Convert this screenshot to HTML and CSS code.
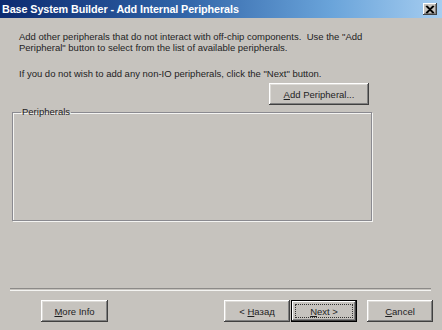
FILE: index.html
```html
<!DOCTYPE html>
<html>
<head>
<meta charset="utf-8">
<link rel="stylesheet" href="styles.css">
</head>
<body>
<div class="window">
  <div class="titlebar">
    <span class="title">Base System Builder - Add Internal Peripherals</span>
    <span class="close"><svg width="10" height="9" viewBox="0 0 10 9"><path d="M1 1 L8 8 M2 1 L9 8 M8 1 L1 8 M9 1 L2 8" stroke="#000" stroke-width="1.2"/></svg></span>
  </div>
  <div class="content">
    <p class="intro">Add other peripherals that do not interact with off-chip components.&nbsp; Use the "Add<br>Peripheral" button to select from the list of available peripherals.</p>
    <p class="hint">If you do not wish to add any non-IO peripherals, click the "Next" button.</p>
    <div class="addrow"><button class="btn add"><u>A</u>dd Peripheral...</button></div>
    <fieldset class="group"><legend>Peripherals</legend></fieldset>
  </div>
  <div class="footer">
    <div class="sep"></div>
    <div class="buttons">
      <button class="btn"><u>M</u>ore Info</button>
      <button class="btn back">&lt; <u>Н</u>азад</button>
      <button class="btn default"><u>N</u>ext &gt;</button>
      <button class="btn cancel"><u>C</u>ancel</button>
    </div>
  </div>
</div>
</body>
</html>
```
FILE: styles.css
```css
html, body { margin: 0; padding: 0; }
body { background: #c6c3be; }
.window {
  width: 442px;
  height: 330px;
  display: flex;
  flex-direction: column;
  background: #c6c3be;
  font-family: "Liberation Sans", Arial, sans-serif;
  font-size: 9.5px;
  color: #1e1e1e;
  box-sizing: border-box;
  overflow: hidden;
}
.titlebar {
  height: 18px;
  flex: none;
  display: flex;
  align-items: center;
  justify-content: space-between;
  padding: 0 5px 0 2px;
  background: linear-gradient(90deg, #0c2a70 0%, #2f62a6 40%, #6aa4da 75%, #a6cdf0 100%);
}
.title {
  color: #fff;
  font-weight: bold;
  font-size: 10.8px;
  letter-spacing: -0.1px;
  white-space: nowrap;
}
.close {
  width: 14px;
  height: 12px;
  display: flex;
  align-items: center;
  justify-content: center;
  background: #c6c3be;
  box-shadow: inset -1px -1px #404040, inset 1px 1px #fff, inset -2px -2px #808080;
}
.content {
  padding: 13px 0 0 12px;
  display: flex;
  flex-direction: column;
}
.intro, .hint {
  margin: 0;
  padding-left: 7px;
  line-height: 11px;
  white-space: nowrap;
}
.hint { margin-top: 15px; }
.addrow {
  display: flex;
  justify-content: flex-end;
  width: 357px;
  margin-top: 4px;
}
.btn {
  font-family: "Liberation Sans", Arial, sans-serif;
  font-size: 9.5px;
  color: #1e1e1e;
  background: #c6c3be;
  border: none;
  padding: 0;
  height: 22px;
  width: 66px;
  box-shadow: inset -1px -1px #404040, inset 1px 1px #fff, inset -2px -2px #808080, inset 2px 2px #dcdad6;
}
.add { width: 100px; }
.group {
  margin: 2px 0 0 0;
  padding: 0;
  width: 360px;
  height: 114px;
  box-sizing: border-box;
  border: 1px solid #8a8a90;
  box-shadow: inset 1px 1px #f4f4f2, 1px 1px #f4f4f2;
}
.group legend {
  margin-left: 8px;
  padding: 0 1px;
  line-height: 10px;
}
.footer {
  margin-top: auto;
  padding-bottom: 8px;
}
.sep {
  margin: 0 11px 0 10px;
  height: 1px;
  border-top: 1px solid #8c8a88;
  border-bottom: 1px solid #f4f4f2;
}
.buttons {
  display: flex;
  padding: 9px 9px 0 41px;
}
.buttons .btn:first-child { width: 67px; }
.back { margin-left: auto; }
.default {
  margin-left: 1px;
  box-shadow: inset 0 0 0 1px #000, inset -2px -2px #404040, inset 2px 2px #fff, inset -3px -3px #808080;
  outline: 1px dotted #333;
  outline-offset: -5px;
}
.cancel { margin-left: 10px; }
```
